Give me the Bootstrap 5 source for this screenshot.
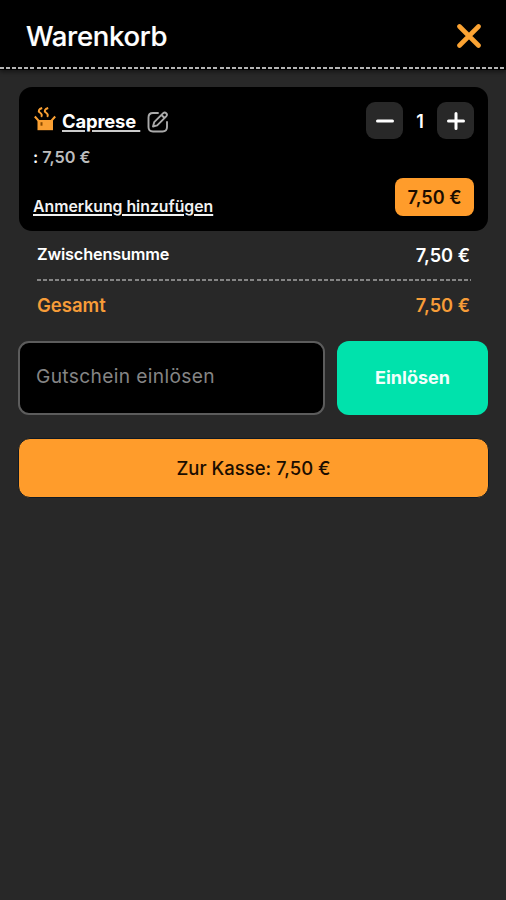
<!DOCTYPE html>
<html lang="de">
<head>
<meta charset="utf-8">
<meta name="viewport" content="width=device-width, initial-scale=1">
<title>Warenkorb</title>
<link href="https://cdn.jsdelivr.net/npm/bootstrap@5.3.0/dist/css/bootstrap.min.css" rel="stylesheet">
<style>
body{background:#282828;color:#fff;font-family:Inter,"Liberation Sans",sans-serif;font-weight:600;min-height:900px;line-height:1.2}
.cart-head{height:70px;background:#000;padding:2px 25px 0 26px;box-shadow:0 2px 4px rgba(0,0,0,.45)}
.cart-title{font-size:27.5px;font-weight:500;letter-spacing:-.32px;-webkit-text-stroke:.2px #fff}
.head-rule{height:2px;margin-top:-3px;position:relative;background:repeating-linear-gradient(90deg,#b4b4b4 0 4px,#000 4px 6.1px)}
.cart-main{padding:18px 17px 0 18px}
.cart-item{height:144px;margin:0 1px;background:#000;border-radius:13px;padding:15px 14px 15px 15px}
.item-head{height:38px;gap:6px}
.item-name{font-size:18.4px;font-weight:700;letter-spacing:-.15px;text-decoration:underline;text-decoration-thickness:2px;text-decoration-color:#ccc;text-underline-offset:2px;white-space:pre}
.edit-icon{margin-top:2px;margin-left:1px}
.item-price{font-size:16.3px;letter-spacing:-.05px;color:#bdbdbd;margin-top:8px;margin-left:-1px}
.item-note{font-size:15.8px;color:#f2f2f2;margin-left:-1px;margin-bottom:-1px;text-decoration-thickness:2px;text-underline-offset:2px}
.qty-btn{width:37px;height:37px;background:#282828;border:0;border-radius:9px}
.qty-num{width:34px;font-size:18px;padding-top:2px}
.price-tag{width:79px;height:38px;background:#ff9c2b;color:#1b0d00;border-radius:8px;font-size:18.1px;padding-top:1px}
.totals{padding:0 18px 0 19px}
.sum-row,.total-row{padding-right:1px}
.sum-row{height:48px}
.total-row{height:50px}
.sum-label{font-size:16.3px;letter-spacing:-.17px;margin-top:-8px}
.sum-value{font-size:18.2px;margin-top:-6px}
.total-row .sum-value{margin-top:-1px}
.total-label{font-size:18.5px;margin-top:-2px}
.sum-rule{height:2px;background:repeating-linear-gradient(90deg,#858585 0 4px,#282828 4px 6.1px)}
.accent{color:#f79c38}
.voucher-row{margin-top:10px;padding-right:1px}
.voucher{width:307px;height:74px;border-radius:11px;padding:0 16px 4px;font-size:19.2px;letter-spacing:.35px;font-weight:400;background:#000!important;border:2px solid #5c5c5c}
.voucher::placeholder{color:#858585;opacity:1}
.redeem{width:151px;height:74px;border-radius:12px;background:#00e2ac;font-size:18px;font-weight:700;border:0;color:#f1fffb;padding-bottom:8px}
.checkout{height:60px;margin-top:23px;border-radius:12px;background:#ff9c2b;border:1px solid #101a24;font-size:18.5px;font-weight:500;color:#1b0d00;padding-top:8px}
</style>
</head>
<body>
<header class="cart-head d-flex align-items-center justify-content-between">
  <h1 class="cart-title m-0">Warenkorb</h1>
  <button class="btn p-0 border-0 d-flex" aria-label="Schließen"><svg width="24" height="24" viewBox="0 0 24 24" fill="none" stroke="#fba333" stroke-width="4.600" stroke-linecap="round"><path d="M2.500 2.500l19 19M21.500 2.500l-19 19"/></svg></button>
</header>
<div class="head-rule"></div>
<main class="cart-main">
  <section class="cart-item d-flex justify-content-between">
    <div class="d-flex flex-column align-items-start">
      <div class="d-flex align-items-center item-head">
        <svg class="mb-1" width="22" height="24" viewBox="0 0 22 24" fill="none" stroke="#faa033" stroke-width="2"><path d="M8.200 1C4.800 2 3.800 4.200 5.800 5.500S8.300 8.300 7.200 9.800M14.200 1c-3.400 1-4.400 3.200-2.400 4.500s2.500 2.800 1.400 4.300"/><path d="M.8 9.500l4 4.500h12.400l4-4.500"/><path fill="#faa033" stroke="none" d="M3.500 13.200h15.500v10H3.500z"/><path stroke="#8a4a00" stroke-width="2" d="M7.500 15.200v3.500"/></svg>
        <a class="item-name text-white" href="#">Caprese&nbsp;</a>
        <svg class="edit-icon" width="22" height="22" viewBox="0 0 22 22" fill="none" stroke="#aaa" stroke-width="1.900" stroke-linecap="round" stroke-linejoin="round"><path d="M11 2H6Q1.500 2 1.500 6.500v9.500Q1.500 20.500 6 20.500h9.500q4.500 0 4.500-4.500v-5"/><path d="M16.200 2.200q1.500-1.400 3 0t0 3.100l-9 9-4.200 1.200 1.200-4.300zM14.500 4l3 3"/></svg>
      </div>
      <div class="item-price"><span class="text-white">:</span> 7,50 €</div>
      <a class="item-note mt-auto" href="#">Anmerkung hinzufügen</a>
    </div>
    <div class="d-flex flex-column justify-content-between align-items-end">
      <div class="d-flex align-items-center">
        <button class="qty-btn p-0 d-flex align-items-center justify-content-center" aria-label="Weniger"><svg width="20" height="20" stroke="#fff" stroke-width="3" stroke-linecap="round"><path d="M2.500 10h15"/></svg></button>
        <span class="qty-num text-center">1</span>
        <button class="qty-btn p-0 d-flex align-items-center justify-content-center" aria-label="Mehr"><svg width="20" height="20" stroke="#fff" stroke-width="3" stroke-linecap="round"><path d="M2.500 10h15M10 2.500v15"/></svg></button>
      </div>
      <div class="price-tag d-flex align-items-center justify-content-center">7,50 €</div>
    </div>
  </section>
  <section class="totals">
    <div class="d-flex justify-content-between align-items-center pt-2 sum-row"><span class="sum-label">Zwischensumme</span><span class="sum-value">7,50 €</span></div>
    <div class="sum-rule"></div>
    <div class="d-flex justify-content-between align-items-center accent total-row"><span class="total-label">Gesamt</span><span class="sum-value">7,50 €</span></div>
  </section>
  <form class="d-flex justify-content-between voucher-row">
    <input class="form-control voucher" placeholder="Gutschein einlösen">
    <button type="button" class="btn redeem">Einlösen</button>
  </form>
  <button class="btn checkout w-100">Zur Kasse: 7,50 €</button>
</main>
<script src="https://cdn.jsdelivr.net/npm/bootstrap@5.3.0/dist/js/bootstrap.bundle.min.js"></script>
</body>
</html>
